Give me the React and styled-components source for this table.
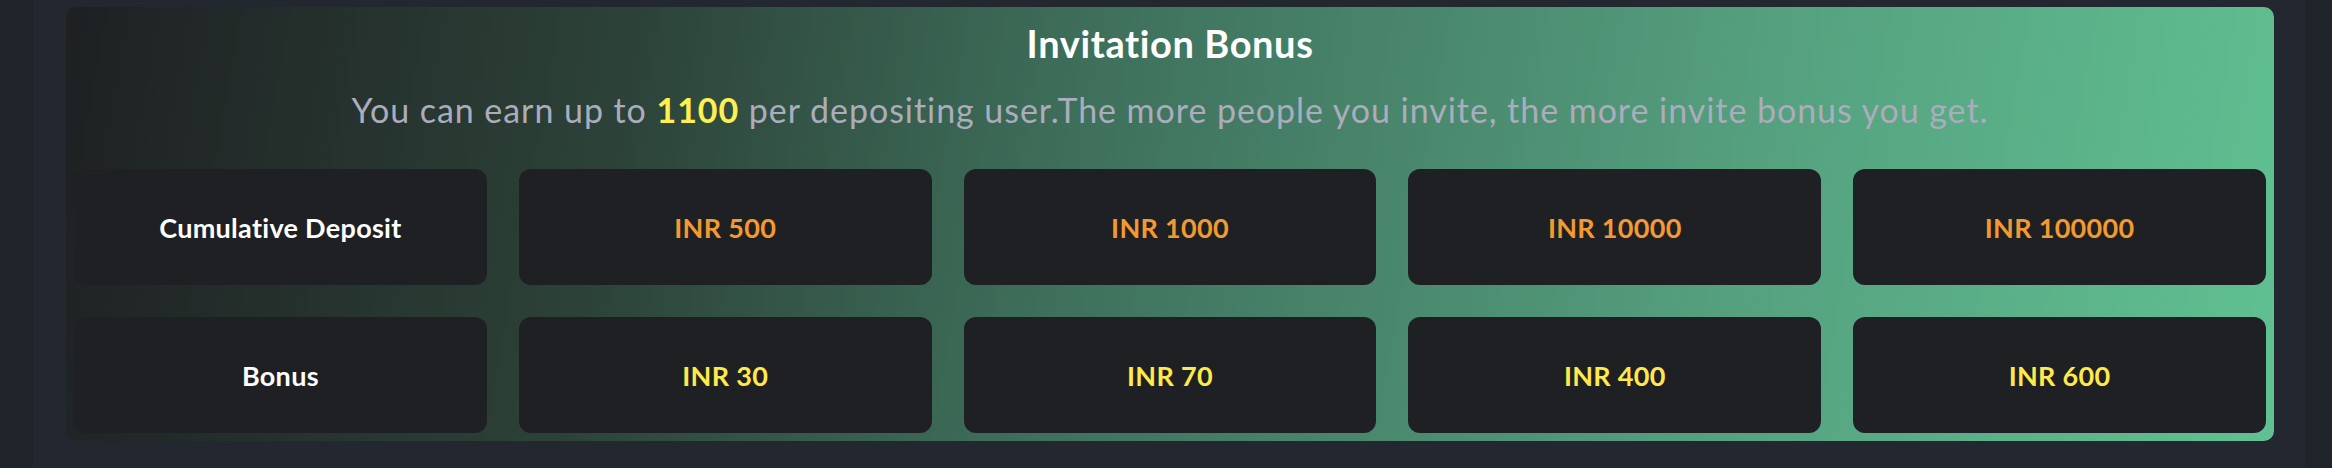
import React from "react";
import styled, { createGlobalStyle } from "styled-components";

const GlobalStyle = createGlobalStyle`
  html, body {
    margin: 0;
    padding: 0;
    background: #23272f;
    font-family: "Lato", "Open Sans", sans-serif;
  }
`;

const Page = styled.div`
  display: flex;
  height: 468px;
  background: #23272f;
`;

const Strip = styled.div`
  width: ${(p) => p.width}px;
  flex: none;
  background: #1f232a;
`;

const Main = styled.main`
  flex: 1;
  padding: 7px 31px 27px 33px;
`;

const Panel = styled.section`
  height: 434px;
  box-sizing: border-box;
  padding: 0 8px 8px;
  border-radius: 10px;
  background: linear-gradient(100deg, #1e2022 0%, #2c4238 25%, #3e6f5b 45%, #55a07f 75%, #60c192 100%);
  display: flex;
  flex-direction: column;
`;

const Header = styled.header`
  height: 162px;
  text-align: center;
  padding-top: 14px;
  box-sizing: border-box;
`;

const Title = styled.h2`
  margin: 0;
  font-size: 38px;
  line-height: 44px;
  font-weight: 700;
  letter-spacing: 0.6px;
  color: #ffffff;
`;

const Subtitle = styled.p`
  margin: 25px 0 0;
  font-size: 34px;
  line-height: 40px;
  font-weight: 400;
  letter-spacing: 0.95px;
  color: #abacbc;
`;

const Highlight = styled.span`
  color: #fff04f;
  font-weight: 700;
`;

const Grid = styled.div`
  display: grid;
  grid-template-columns: repeat(5, 1fr);
  grid-auto-rows: 116px;
  column-gap: 32px;
  row-gap: 32px;
`;

const Cell = styled.div`
  display: flex;
  align-items: center;
  justify-content: center;
  background: #1f2024;
  border-radius: 12px;
  font-size: 27px;
  font-weight: 700;
  letter-spacing: 0.3px;
  color: ${(p) => p.color || "#ffffff"};
`;

const deposits = ["INR 500", "INR 1000", "INR 10000", "INR 100000"];
const bonuses = ["INR 30", "INR 70", "INR 400", "INR 600"];

export default function App() {
  return (
    <>
      <GlobalStyle />
      <Page>
        <Strip width={33} />
        <Main>
          <Panel>
            <Header>
              <Title>Invitation Bonus</Title>
              <Subtitle>
                You can earn up to <Highlight>1100</Highlight> per depositing
                user.The more people you invite, the more invite bonus you get.
              </Subtitle>
            </Header>
            <Grid>
              <Cell>Cumulative Deposit</Cell>
              {deposits.map((d) => (
                <Cell key={d} color="#f29a30">
                  {d}
                </Cell>
              ))}
              <Cell>Bonus</Cell>
              {bonuses.map((b) => (
                <Cell key={b} color="#ffe94d">
                  {b}
                </Cell>
              ))}
            </Grid>
          </Panel>
        </Main>
        <Strip width={27} />
      </Page>
    </>
  );
}
